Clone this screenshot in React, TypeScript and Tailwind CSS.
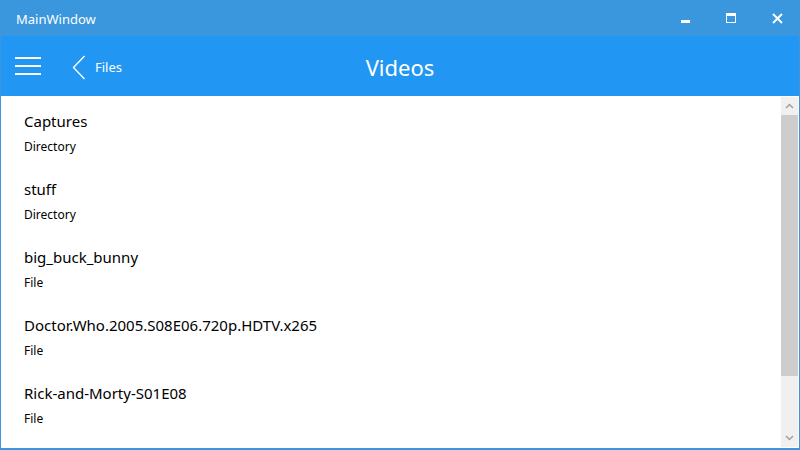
import React from "react";

const items = [
  { name: "Captures", kind: "Directory" },
  { name: "stuff", kind: "Directory" },
  { name: "big_buck_bunny", kind: "File" },
  { name: "Doctor.Who.2005.S08E06.720p.HDTV.x265", kind: "File" },
  { name: "Rick-and-Morty-S01E08", kind: "File" },
];

export default function App() {
  const font = { fontFamily: '"Noto Sans", "Open Sans", sans-serif' };
  return (
    <div className="w-[800px] h-[450px] flex flex-col bg-[#3a96dd] overflow-hidden" style={font}>
      {/* Title bar */}
      <div className="h-[36px] flex items-center text-white shrink-0">
        <div className="pl-[16px] pt-[3px] text-[13px] flex-1">MainWindow</div>
        <div className="w-[46px] h-full flex items-center justify-center">
          <div className="w-[9px] h-[3px] bg-white mt-[6px]"></div>
        </div>
        <div className="w-[46px] h-full flex items-center justify-center">
          <div className="w-[10px] h-[10px] border border-white border-t-[3px]"></div>
        </div>
        <div className="w-[46px] h-full flex items-center justify-center">
          <svg width="11" height="11" viewBox="0 0 11 11">
            <path d="M1 1 L10 10 M10 1 L1 10" stroke="white" strokeWidth="2" />
          </svg>
        </div>
      </div>
      {/* Window body */}
      <div className="flex-1 flex flex-col mx-[1px] mb-[2px] bg-white overflow-hidden">
        {/* Header */}
        <div className="h-[60px] bg-[#2196f3] flex items-center text-white shrink-0 relative">
          <div className="pl-[14px] flex flex-col gap-[6px]">
            <div className="w-[26px] h-[2px] bg-white"></div>
            <div className="w-[26px] h-[2px] bg-white"></div>
            <div className="w-[26px] h-[2px] bg-white"></div>
          </div>
          <div className="ml-[31px] flex items-center pt-[2px]">
            <svg width="14" height="25" viewBox="0 0 14 25">
              <path d="M12.5 1 L1.5 12.5 L12.5 24" stroke="white" strokeWidth="1.4" fill="none" />
            </svg>
            <span className="ml-[9px] text-[13px] pt-[2px]">Files</span>
          </div>
          <div className="absolute left-0 right-0 top-0 bottom-0 flex items-center justify-center pointer-events-none">
            <span className="text-[22px] pt-[2px]">Videos</span>
          </div>
        </div>
        {/* Content */}
        <div className="flex-1 flex overflow-hidden">
          <div className="flex-1 flex flex-col pl-[23px] pt-[14px]">
            {items.map((it) => (
              <div key={it.name} className="h-[68px] flex flex-col shrink-0">
                <div className="text-[15px] text-black leading-[22px]">{it.name}</div>
                <div className="text-[12px] text-black leading-[18px] mt-[6px]">{it.kind}</div>
              </div>
            ))}
          </div>
          <div className="w-[17px] mr-[1px] mt-[1px] mb-[1px] bg-[#f0f0f0] flex flex-col">
            <div className="h-[18px] flex items-center justify-center">
              <svg width="9" height="6" viewBox="0 0 9 6">
                <path d="M1 5 L4.5 1.5 L8 5" stroke="#a0a0a0" strokeWidth="1.5" fill="none" />
              </svg>
            </div>
            <div className="h-[261px] bg-[#cdcdcd]"></div>
            <div className="flex-1"></div>
            <div className="h-[18px] flex items-center justify-center">
              <svg width="9" height="6" viewBox="0 0 9 6">
                <path d="M1 1 L4.5 4.5 L8 1" stroke="#a0a0a0" strokeWidth="1.5" fill="none" />
              </svg>
            </div>
          </div>
        </div>
      </div>
    </div>
  );
}
